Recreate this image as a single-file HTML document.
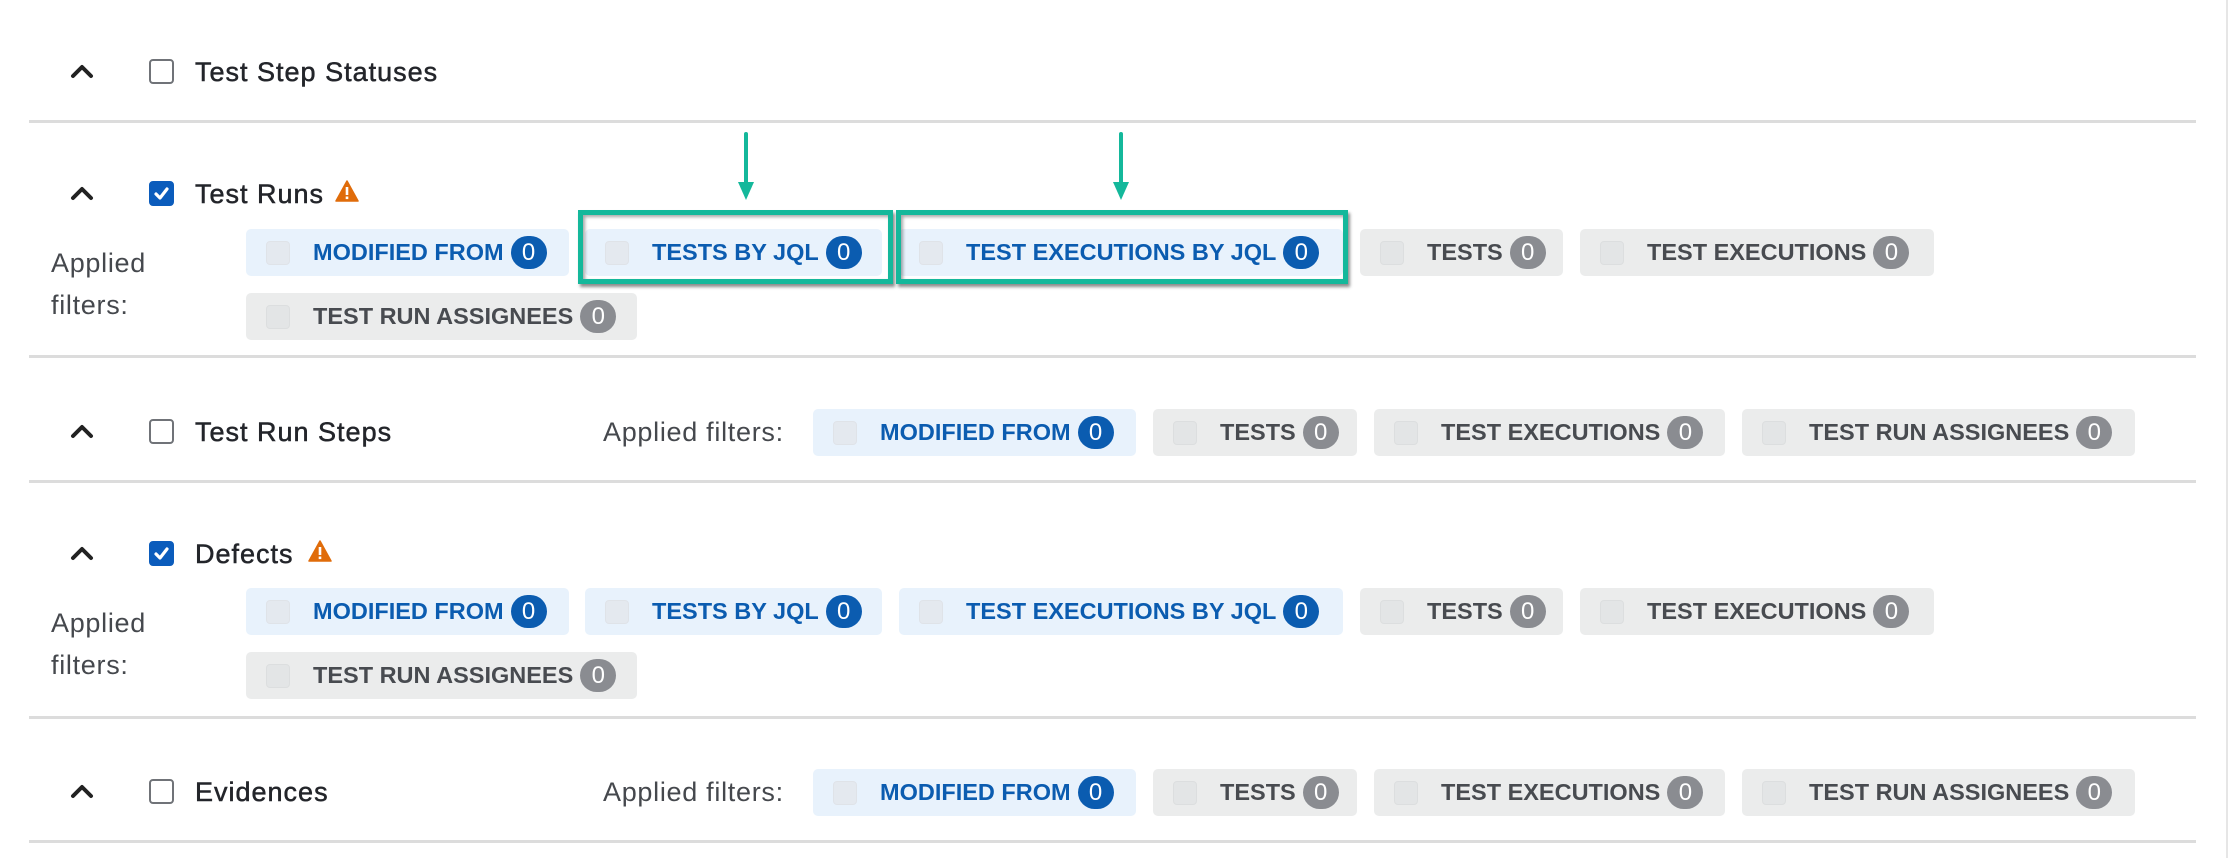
<!DOCTYPE html>
<html><head><meta charset="utf-8"><style>
body{margin:0;width:2230px;height:858px;background:#fff;position:relative;overflow:hidden;font-family:"Liberation Sans",Arial,sans-serif;color:#2a2c30}
.a{position:absolute}
.sep{position:absolute;left:29px;width:2167px;height:3px;background:#dcdcdc}
.vl{position:absolute;left:2226px;top:0;width:2px;height:858px;background:#e6e6e6}
.chev{position:absolute;width:24px;height:16px}
.cb{position:absolute;width:21px;height:21px;border:2px solid #707378;border-radius:4px;background:#fff}
.cb.on{background:#0b5cbc;border-color:#0b5cbc}
.title{position:absolute;font-size:27px;line-height:30px;color:#23252a;letter-spacing:1px;-webkit-text-stroke:0.5px #23252a}
.af{position:absolute;font-size:27px;line-height:42px;color:#45484d;letter-spacing:0.7px}
.chip{position:absolute;height:47px;border-radius:5px;display:flex;align-items:center;box-sizing:border-box;padding-left:20px;font-weight:bold;font-size:23.5px;white-space:nowrap}
.chip.b{background:#e8f2fc;color:#0b5cb0}
.chip.g{background:#ebecec;color:#484b50}
.chip i{display:block;width:22px;height:22px;border:1px solid #dfe3e8;border-radius:4px;background:#e4e9ef;margin-right:23px}
.chip.g i{background:#e3e5e6;border-color:#dcdedf}
.chip em{font-style:normal;display:inline-block;margin-left:7px;height:33px;min-width:36px;border-radius:17px;color:#fff;font-weight:normal;font-size:24px;line-height:33px;text-align:center}
.chip.b em{background:#0b5cb0}
.chip.g em{background:#8a8c91}
.hl{position:absolute;border:5px solid #14b89b;box-shadow:2px 3px 3px rgba(0,0,0,.45), inset 2px 2px 3px rgba(0,0,0,.35)}
</style></head><body>
<div class="vl"></div>
<div class="sep" style="top:120px"></div>
<div class="sep" style="top:355px"></div>
<div class="sep" style="top:480px"></div>
<div class="sep" style="top:716px"></div>
<div class="sep" style="top:840px"></div>

<svg class="chev" style="left:70px;top:63px" viewBox="0 0 24 16"><path d="M3 13 L12 4 L21 13" fill="none" stroke="#222" stroke-width="4" stroke-linecap="round" stroke-linejoin="round"/></svg>
<svg class="chev" style="left:70px;top:185px" viewBox="0 0 24 16"><path d="M3 13 L12 4 L21 13" fill="none" stroke="#222" stroke-width="4" stroke-linecap="round" stroke-linejoin="round"/></svg>
<svg class="chev" style="left:70px;top:423px" viewBox="0 0 24 16"><path d="M3 13 L12 4 L21 13" fill="none" stroke="#222" stroke-width="4" stroke-linecap="round" stroke-linejoin="round"/></svg>
<svg class="chev" style="left:70px;top:545px" viewBox="0 0 24 16"><path d="M3 13 L12 4 L21 13" fill="none" stroke="#222" stroke-width="4" stroke-linecap="round" stroke-linejoin="round"/></svg>
<svg class="chev" style="left:70px;top:783px" viewBox="0 0 24 16"><path d="M3 13 L12 4 L21 13" fill="none" stroke="#222" stroke-width="4" stroke-linecap="round" stroke-linejoin="round"/></svg>

<div class="cb" style="left:149px;top:59px"></div>
<div class="cb on" style="left:149px;top:181px"><svg width="21" height="21" viewBox="0 0 21 21"><path d="M5 11 L9 15 L16 6" fill="none" stroke="#fff" stroke-width="3.2" stroke-linecap="round" stroke-linejoin="round"/></svg></div>
<div class="cb" style="left:149px;top:419px"></div>
<div class="cb on" style="left:149px;top:541px"><svg width="21" height="21" viewBox="0 0 21 21"><path d="M5 11 L9 15 L16 6" fill="none" stroke="#fff" stroke-width="3.2" stroke-linecap="round" stroke-linejoin="round"/></svg></div>
<div class="cb" style="left:149px;top:779px"></div>

<div class="title" style="left:195px;top:57px">Test Step Statuses</div>
<div class="title" style="left:195px;top:179px">Test Runs</div>
<div class="title" style="left:195px;top:417px">Test Run Steps</div>
<div class="title" style="left:195px;top:539px">Defects</div>
<div class="title" style="left:195px;top:777px">Evidences</div>

<svg class="a" style="left:335px;top:180px" width="24" height="22" viewBox="0 0 24 22"><path d="M12 1 L23 21 L1 21 Z" fill="#e06c0a" stroke="#e06c0a" stroke-width="1.5" stroke-linejoin="round"/><rect x="10.7" y="7" width="2.6" height="8" fill="#fff"/><rect x="10.7" y="16.5" width="2.6" height="2.6" fill="#fff"/></svg>
<svg class="a" style="left:308px;top:540px" width="24" height="22" viewBox="0 0 24 22"><path d="M12 1 L23 21 L1 21 Z" fill="#e06c0a" stroke="#e06c0a" stroke-width="1.5" stroke-linejoin="round"/><rect x="10.7" y="7" width="2.6" height="8" fill="#fff"/><rect x="10.7" y="16.5" width="2.6" height="2.6" fill="#fff"/></svg>

<div class="af" style="left:51px;top:242px">Applied<br>filters:</div>
<div class="chip b" style="left:246px;top:229px;width:323px"><i></i>MODIFIED FROM<em>0</em></div>
<div class="chip b" style="left:585px;top:229px;width:297px"><i></i>TESTS BY JQL<em>0</em></div>
<div class="chip b" style="left:899px;top:229px;width:444px"><i></i>TEST EXECUTIONS BY JQL<em>0</em></div>
<div class="chip g" style="left:1360px;top:229px;width:203px"><i></i>TESTS<em>0</em></div>
<div class="chip g" style="left:1580px;top:229px;width:354px"><i></i>TEST EXECUTIONS<em>0</em></div>
<div class="chip g" style="left:246px;top:293px;width:391px"><i></i>TEST RUN ASSIGNEES<em>0</em></div>
<div class="hl" style="left:578px;top:210px;width:305px;height:64px"></div>
<div class="hl" style="left:896px;top:210px;width:442px;height:64px"></div>
<svg class="a" style="left:734px;top:132px" width="24" height="70" viewBox="0 0 24 70"><path d="M12 2 V52" stroke="#14b89b" stroke-width="4" stroke-linecap="round"/><path d="M4 50 L20 50 L12 68 Z" fill="#14b89b"/></svg>
<svg class="a" style="left:1109px;top:132px" width="24" height="70" viewBox="0 0 24 70"><path d="M12 2 V52" stroke="#14b89b" stroke-width="4" stroke-linecap="round"/><path d="M4 50 L20 50 L12 68 Z" fill="#14b89b"/></svg>

<div class="af" style="left:603px;top:411px">Applied filters:</div>
<div class="chip b" style="left:813px;top:409px;width:323px"><i></i>MODIFIED FROM<em>0</em></div>
<div class="chip g" style="left:1153px;top:409px;width:204px"><i></i>TESTS<em>0</em></div>
<div class="chip g" style="left:1374px;top:409px;width:351px"><i></i>TEST EXECUTIONS<em>0</em></div>
<div class="chip g" style="left:1742px;top:409px;width:393px"><i></i>TEST RUN ASSIGNEES<em>0</em></div>

<div class="af" style="left:51px;top:602px">Applied<br>filters:</div>
<div class="chip b" style="left:246px;top:588px;width:323px"><i></i>MODIFIED FROM<em>0</em></div>
<div class="chip b" style="left:585px;top:588px;width:297px"><i></i>TESTS BY JQL<em>0</em></div>
<div class="chip b" style="left:899px;top:588px;width:444px"><i></i>TEST EXECUTIONS BY JQL<em>0</em></div>
<div class="chip g" style="left:1360px;top:588px;width:203px"><i></i>TESTS<em>0</em></div>
<div class="chip g" style="left:1580px;top:588px;width:354px"><i></i>TEST EXECUTIONS<em>0</em></div>
<div class="chip g" style="left:246px;top:652px;width:391px"><i></i>TEST RUN ASSIGNEES<em>0</em></div>

<div class="af" style="left:603px;top:771px">Applied filters:</div>
<div class="chip b" style="left:813px;top:769px;width:323px"><i></i>MODIFIED FROM<em>0</em></div>
<div class="chip g" style="left:1153px;top:769px;width:204px"><i></i>TESTS<em>0</em></div>
<div class="chip g" style="left:1374px;top:769px;width:351px"><i></i>TEST EXECUTIONS<em>0</em></div>
<div class="chip g" style="left:1742px;top:769px;width:393px"><i></i>TEST RUN ASSIGNEES<em>0</em></div>
</body></html>
